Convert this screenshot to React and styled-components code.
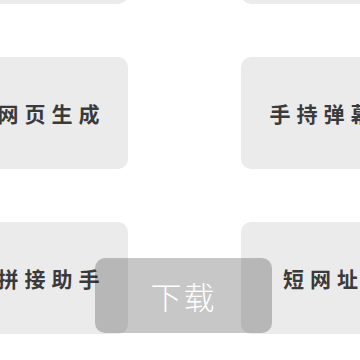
import React from 'react'
import styled, { createGlobalStyle } from 'styled-components'

const Global = createGlobalStyle`
  html, body {
    margin: 0;
    padding: 0;
    background: #fff;
  }
  body {
    font-family: 'Noto Sans CJK SC', 'Noto Sans', sans-serif;
  }
`

const Page = styled.div`
  position: relative;
  width: 360px;
  height: 360px;
  overflow: hidden;
  background: #fff;
`

const Grid = styled.div`
  display: grid;
  grid-template-columns: repeat(2, 159px);
  grid-auto-rows: 112px;
  column-gap: 113px;
  row-gap: 53px;
  margin: -108px 0 0 -31px;
`

const Card = styled.div`
  display: flex;
  align-items: center;
  justify-content: center;
  background: #ebebeb;
  border-radius: 10px;
`

const Label = styled.span`
  font-size: 21px;
  font-weight: 700;
  color: #3a3a3a;
  letter-spacing: 6px;
  margin-right: -6px;
  white-space: nowrap;
`

const Toast = styled.div`
  position: absolute;
  left: 95px;
  top: 258px;
  width: 177px;
  height: 75px;
  border-radius: 10px;
  background: rgba(0, 0, 0, 0.22);
  display: flex;
  align-items: center;
  justify-content: center;
  color: #fff;
  font-size: 31px;
  font-weight: 300;
  letter-spacing: 2px;
`

const tools = ['图片压缩', '二维码', '网页生成', '手持弹幕', '拼接助手', '短网址']

export default function App() {
  return (
    <Page>
      <Global />
      <Grid>
        {tools.map((t) => (
          <Card key={t}>
            <Label>{t}</Label>
          </Card>
        ))}
      </Grid>
      <Toast>下载</Toast>
    </Page>
  )
}
